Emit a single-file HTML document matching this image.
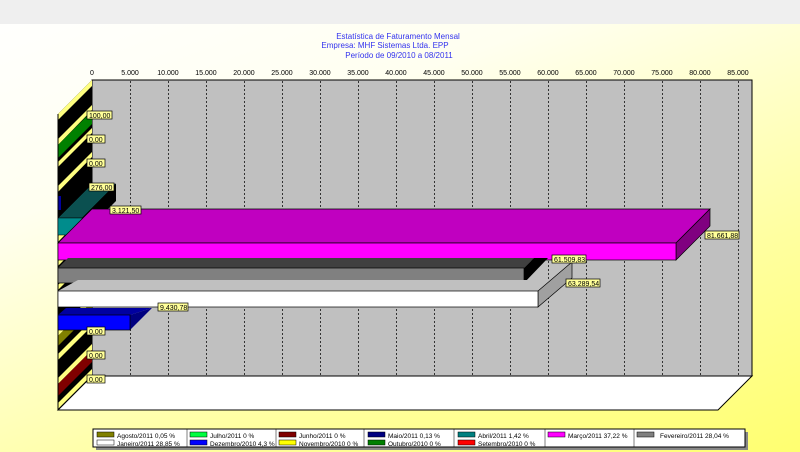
<!DOCTYPE html>
<html><head><meta charset="utf-8"><style>
html,body{margin:0;padding:0;width:800px;height:452px;overflow:hidden;font-family:"Liberation Sans",sans-serif}
.bg{position:absolute;left:0;top:0;width:800px;height:452px;background:linear-gradient(160deg,#ffffff 0%,#fffff0 30%,#ffffa0 70%,#ffff70 100%)}
.top{position:absolute;left:0;top:0;width:800px;height:24px;background:#efefef}
svg{position:absolute;left:0;top:0}
</style></head><body>
<div class="bg"></div><div class="top"></div>
<svg width="800" height="452" font-family="Liberation Sans, sans-serif">
<g fill="#3333ee" font-size="8" text-anchor="middle">
<text x="398" y="39">Estatística de Faturamento Mensal</text>
<text x="385" y="48">Empresa: MHF Sistemas Ltda. EPP</text>
<text x="399" y="58">Período de 09/2010 a 08/2011</text>
</g>
<g font-size="7" text-anchor="middle" fill="#000">
<text x="92" y="75">0</text><text x="130" y="75">5.000</text><text x="168" y="75">10.000</text><text x="206" y="75">15.000</text><text x="244" y="75">20.000</text><text x="282" y="75">25.000</text><text x="320" y="75">30.000</text><text x="358" y="75">35.000</text><text x="396" y="75">40.000</text><text x="434" y="75">45.000</text><text x="472" y="75">50.000</text><text x="510" y="75">55.000</text><text x="548" y="75">60.000</text><text x="586" y="75">65.000</text><text x="624" y="75">70.000</text><text x="662" y="75">75.000</text><text x="700" y="75">80.000</text><text x="738" y="75">85.000</text>
</g>
<!-- back wall -->
<rect x="92" y="80" width="660" height="296" fill="#c0c0c0" stroke="#000" stroke-width="1"/>
<g stroke="#333" stroke-dasharray="2,2" stroke-width="1">
<line x1="130.5" y1="81" x2="130.5" y2="376"/><line x1="168.5" y1="81" x2="168.5" y2="376"/><line x1="206.5" y1="81" x2="206.5" y2="376"/><line x1="244.5" y1="81" x2="244.5" y2="376"/><line x1="282.5" y1="81" x2="282.5" y2="376"/><line x1="320.5" y1="81" x2="320.5" y2="376"/><line x1="358.5" y1="81" x2="358.5" y2="376"/><line x1="396.5" y1="81" x2="396.5" y2="376"/><line x1="434.5" y1="81" x2="434.5" y2="376"/><line x1="472.5" y1="81" x2="472.5" y2="376"/><line x1="510.5" y1="81" x2="510.5" y2="376"/><line x1="548.5" y1="81" x2="548.5" y2="376"/><line x1="586.5" y1="81" x2="586.5" y2="376"/><line x1="624.5" y1="81" x2="624.5" y2="376"/><line x1="662.5" y1="81" x2="662.5" y2="376"/><line x1="700.5" y1="81" x2="700.5" y2="376"/><line x1="738.5" y1="81" x2="738.5" y2="376"/>
</g>
<!-- floor -->
<polygon points="92,376 752,376 718,410 58,410" fill="#fff" stroke="#000"/>
<!-- left wall -->
<polygon points="58,114 92,80 92,376 58,410" fill="#000"/>
<g fill="#ffff80">
<polygon points="58,114 92,80 92,86 58,120"/>
<polygon points="58,139 92,105 92,110 58,145"/>
<polygon points="58,162 92,128 92,133 58,167"/>
<polygon points="58,186 92,152 92,157 58,192"/>
<polygon points="58,236 92,202 92,207 58,242"/>
<polygon points="58,261 92,227 92,232 58,266"/>
<polygon points="58,285 92,251 92,256 58,290"/>
<polygon points="58,330 92,296 92,302 58,336"/>
<polygon points="58,354 92,320 92,326 58,360"/>
<polygon points="58,378 92,344 92,350 58,384"/>
<polygon points="58,403 92,369 92,375 58,409"/>
</g>
<polygon points="58,145 92,111 92,124 58,158" fill="#008000"/>
<polygon points="58,336 92,302 92,312 58,346" fill="#808000"/>
<polygon points="58,384 92,350 92,362 58,396" fill="#800000"/>
<rect x="58" y="196" width="3" height="14" fill="#0000a0"/>
<line x1="58" y1="114" x2="58" y2="410" stroke="#000"/>
<!-- teal -->
<polygon points="58,218 82,218 116,184 116,201 82,235 58,235" fill="#000"/>
<polygon points="58,218 92,184 116,184 82,218" fill="#0b5050" stroke="#000" stroke-width=".5"/>
<rect x="58" y="218" width="24" height="17" fill="#008c8c" stroke="#000" stroke-width=".5"/>
<!-- magenta -->
<polygon points="58,243 92,209 710,209 676,243" fill="#c000c0" stroke="#000" stroke-width=".7"/>
<polygon points="676,243 710,209 710,226 676,260" fill="#800080" stroke="#000" stroke-width=".7"/>
<rect x="58" y="243" width="618" height="17" fill="#ff00ff" stroke="#000" stroke-width=".7"/>
<!-- gray -->
<polygon points="58,268 68,258 534,258 524,268" fill="#404040"/>
<polygon points="524,268 534,258 548,258 524,283" fill="#000"/>
<rect x="58" y="268" width="466" height="15" fill="#808080" stroke="#000" stroke-width=".7"/>
<!-- white -->
<polygon points="58,291 78,280 556,280 538,291" fill="#c0c0c0"/>
<polygon points="538,291 572,262 572,278 538,307" fill="#a0a0a0" stroke="#000" stroke-width=".7"/>
<rect x="58" y="291" width="480" height="16" fill="#fff" stroke="#000" stroke-width=".7"/>
<!-- blue -->
<polygon points="58,315 66,308 152,308 130,315" fill="#0000a0"/>
<polygon points="130,315 152,308 130,330" fill="#000080"/>
<rect x="58" y="315" width="72" height="15" fill="#0000ff" stroke="#000" stroke-width=".7"/>
<!-- labels -->
<g font-size="7" fill="#000">
<g stroke="#000" stroke-width=".7" fill="#ffff99">
<rect x="87" y="111" width="25" height="8"/><rect x="87" y="135" width="18" height="8"/><rect x="87" y="159" width="18" height="8"/><rect x="89" y="183" width="25" height="8"/><rect x="110" y="206" width="31" height="8"/><rect x="705" y="231" width="34" height="8"/><rect x="552" y="255" width="34" height="8"/><rect x="566" y="279" width="34" height="8"/><rect x="158" y="303" width="30" height="8"/><rect x="87" y="327" width="18" height="8"/><rect x="87" y="351" width="18" height="8"/><rect x="87" y="375" width="18" height="8"/>
</g>
<text x="89" y="118">100,00</text><text x="89" y="142">0,00</text><text x="89" y="166">0,00</text><text x="91" y="190">276,00</text><text x="112" y="213">3.121,50</text><text x="707" y="238">81.661,88</text><text x="554" y="262">61.509,83</text><text x="568" y="286">63.289,54</text><text x="160" y="310">9.430,78</text><text x="89" y="334">0,00</text><text x="89" y="358">0,00</text><text x="89" y="382">0,00</text>
</g>
<!-- legend -->
<rect x="96" y="432" width="652" height="18" fill="#888"/>
<rect x="93" y="429" width="652" height="18" fill="#fff" stroke="#000"/>
<g stroke="#000" stroke-width=".5">
<line x1="187" y1="429" x2="187" y2="447"/><line x1="276" y1="429" x2="276" y2="447"/><line x1="364" y1="429" x2="364" y2="447"/><line x1="454" y1="429" x2="454" y2="447"/><line x1="545" y1="429" x2="545" y2="447"/><line x1="634" y1="429" x2="634" y2="447"/>
<rect x="97" y="432" width="17" height="5" fill="#808000"/><rect x="97" y="440" width="17" height="5" fill="#fff"/>
<rect x="190" y="432" width="17" height="5" fill="#00ff40"/><rect x="190" y="440" width="17" height="5" fill="#0000ff"/>
<rect x="279" y="432" width="17" height="5" fill="#800000"/><rect x="279" y="440" width="17" height="5" fill="#ffff00"/>
<rect x="368" y="432" width="17" height="5" fill="#000080"/><rect x="368" y="440" width="17" height="5" fill="#008000"/>
<rect x="458" y="432" width="17" height="5" fill="#008080"/><rect x="458" y="440" width="17" height="5" fill="#ff0000"/>
<rect x="548" y="432" width="17" height="5" fill="#ff00ff"/>
<rect x="637" y="432" width="17" height="5" fill="#808080"/>
</g>
<g font-size="6.5" fill="#000">
<text x="117" y="438">Agosto/2011 0,05 %</text><text x="117" y="446">Janeiro/2011 28,85 %</text>
<text x="210" y="438">Julho/2011 0 %</text><text x="210" y="446">Dezembro/2010 4,3 %</text>
<text x="299" y="438">Junho/2011 0 %</text><text x="299" y="446">Novembro/2010 0 %</text>
<text x="388" y="438">Maio/2011 0,13 %</text><text x="388" y="446">Outubro/2010 0 %</text>
<text x="478" y="438">Abril/2011 1,42 %</text><text x="478" y="446">Setembro/2010 0 %</text>
<text x="568" y="438">Março/2011 37,22 %</text>
<text x="660" y="438">Fevereiro/2011 28,04 %</text>
</g>
</svg>
</body></html>
